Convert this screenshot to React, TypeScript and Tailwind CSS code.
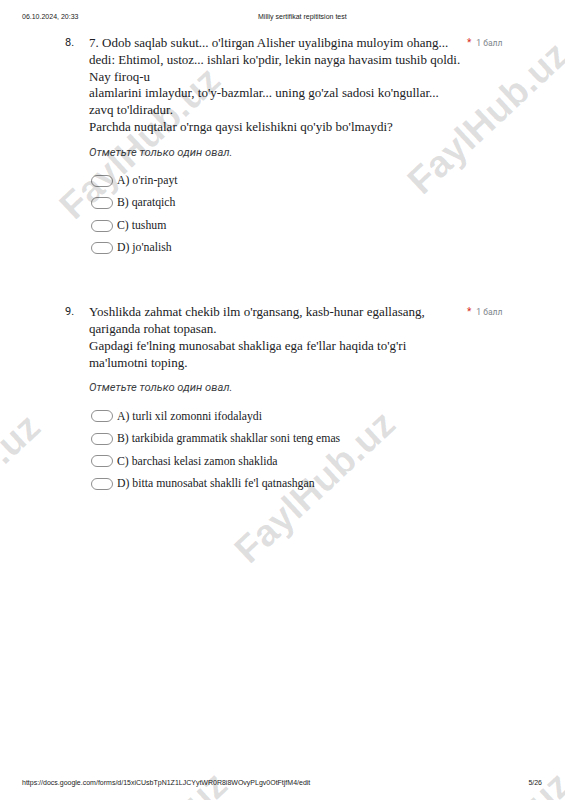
import React from "react";

const serif = { fontFamily: '"Liberation Serif", serif' } as const;

function Oval() {
  return <span className="inline-block w-[22px] h-[12px] rounded-full border border-[#8f8f8f] shrink-0" />;
}

function Points() {
  return (
    <div className="w-[36px] shrink-0 flex items-start gap-[5px] text-[8.5px] leading-[16px] font-['Roboto',sans-serif]">
      <span className="text-[#d93025] text-[10px]">*</span>
      <span className="text-[#80868b]">1 балл</span>
    </div>
  );
}

function Question({ num, lines, options }: { num: string; lines: string[]; options: string[] }) {
  return (
    <div className="flex">
      <div className="w-[24px] shrink-0 text-[11px] leading-[16.8px] text-[#202124] font-['Roboto',sans-serif]">{num}</div>
      <div className="flex-1 flex flex-col">
        <div className="text-[13px] leading-[16.8px] text-[#202124]" style={serif}>
          {lines.map((l, i) => (
            <div key={i} className="whitespace-nowrap">{l}</div>
          ))}
        </div>
        <div className="mt-[9px] text-[11.2px] leading-[16px] italic text-[#3c4043] font-['Roboto',sans-serif]">
          Отметьте только один овал.
        </div>
        <div className="mt-[12px] flex flex-col gap-[6.5px]">
          {options.map((o, i) => (
            <div key={i} className="flex items-center gap-[4px] h-[16px] pl-[2px]">
              <Oval />
              <span className="text-[11.75px] text-[#202124] whitespace-nowrap" style={serif}>{o}</span>
            </div>
          ))}
        </div>
      </div>
      <Points />
    </div>
  );
}

function Watermark({ x, y }: { x: number; y: number }) {
  return (
    <span
      className="absolute -translate-x-1/2 -translate-y-1/2 -rotate-[43deg] whitespace-nowrap text-[38px] font-bold text-black/[0.13] pointer-events-none select-none font-['Liberation_Sans',sans-serif]"
      style={{ left: x, top: y }}
    >
      FaylHub.uz
    </span>
  );
}

export default function App() {
  return (
    <div className="relative w-[565px] h-[800px] overflow-hidden bg-white flex flex-col font-['Liberation_Sans',sans-serif]">
      <div className="px-[22px] pt-[13px] grid grid-cols-[236px_auto] text-[7px] leading-[8px] text-[#222]">
        <span>06.10.2024, 20:33</span>
        <span>Milliy sertifikat repititsion test</span>
      </div>
      <div className="pl-[65px] pr-[62px] mt-[14px] flex flex-col gap-[48px]">
        <Question
          num="8."
          lines={[
            "7. Odob saqlab sukut... o'ltirgan Alisher uyalibgina muloyim ohang...",
            "dedi: Ehtimol, ustoz... ishlari ko'pdir, lekin nayga havasim tushib qoldi.",
            "Nay firoq-u",
            "alamlarini imlaydur, to'y-bazmlar... uning go'zal sadosi ko'ngullar...",
            "zavq to'ldiradur.",
            "Parchda nuqtalar o'rnga qaysi kelishikni qo'yib bo'lmaydi?",
          ]}
          options={["A) o'rin-payt", "B) qaratqich", "C) tushum", "D) jo'nalish"]}
        />
        <Question
          num="9."
          lines={[
            "Yoshlikda zahmat chekib ilm o'rgansang, kasb-hunar egallasang,",
            "qariganda rohat topasan.",
            "Gapdagi fe'lning munosabat shakliga ega fe'llar haqida to'g'ri",
            "ma'lumotni toping.",
          ]}
          options={[
            "A) turli xil zomonni ifodalaydi",
            "B) tarkibida grammatik shakllar soni teng emas",
            "C) barchasi kelasi zamon shaklida",
            "D) bitta munosabat shaklli fe'l qatnashgan",
          ]}
        />
      </div>
      <div className="mt-auto px-[22px] pb-[13px] flex justify-between text-[7px] leading-[8px] text-[#222]">
        <span>https://docs.google.com/forms/d/15xiCUsbTpN1Z1LJCYytWR0R8i8WOvyPLgv0OtFtjfM4/edit</span>
        <span className="pr-[1px]">5/26</span>
      </div>
      <Watermark x={140} y={143} />
      <Watermark x={488} y={118} />
      <Watermark x={-40} y={490} />
      <Watermark x={315} y={487} />
      <Watermark x={147} y={848} />
      <Watermark x={490} y={848} />
    </div>
  );
}
